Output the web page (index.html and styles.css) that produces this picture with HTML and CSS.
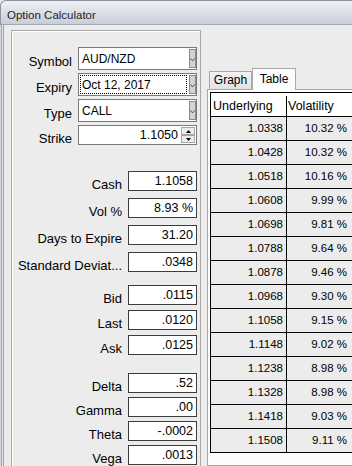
FILE: index.html
```html
<!DOCTYPE html>
<html lang="en">
<head>
<meta charset="UTF-8" />
<meta name="viewport" content="width=device-width, initial-scale=1" />
<title>Option Calculator</title>
<link rel="stylesheet" href="styles.css">
</head>
<body>

<div class="window">
  <div class="titlebar">Option Calculator</div>

  <div class="frame">
    <div class="panel">
      <div class="group g-contract">
        <div class="row">
          <span class="lbl">Symbol</span>
          <div class="combo">
            <span class="val">AUD/NZD</span>
            <span class="drop"><svg width="5" height="4" viewBox="0 0 5 4"><polyline points="0.5,0.5 2.5,2.8 4.5,0.5" fill="none" stroke="#4a4a4a" stroke-width="1"/></svg></span>
          </div>
        </div>
        <div class="row">
          <span class="lbl">Expiry</span>
          <div class="combo focus">
            <span class="val">Oct 12, 2017</span>
            <span class="drop"><svg width="5" height="4" viewBox="0 0 5 4"><polyline points="0.5,0.5 2.5,2.8 4.5,0.5" fill="none" stroke="#4a4a4a" stroke-width="1"/></svg></span>
          </div>
        </div>
        <div class="row">
          <span class="lbl">Type</span>
          <div class="combo">
            <span class="val">CALL</span>
            <span class="drop"><svg width="5" height="4" viewBox="0 0 5 4"><polyline points="0.5,0.5 2.5,2.8 4.5,0.5" fill="none" stroke="#4a4a4a" stroke-width="1"/></svg></span>
          </div>
        </div>
        <div class="row">
          <span class="lbl">Strike</span>
          <div class="spin">
            <span class="val">1.1050</span>
            <span class="arrows">
              <span class="arrow"><svg width="5" height="3" viewBox="0 0 5 3"><polygon points="0,3 2.5,0 5,3" fill="#000"/></svg></span>
              <span class="arrow"><svg width="5" height="3" viewBox="0 0 5 3"><polygon points="0,0 2.5,3 5,0" fill="#000"/></svg></span>
            </span>
          </div>
        </div>
      </div>

      <div class="group g-market">
        <div class="row"><span class="lbl">Cash</span><div class="box">1.1058</div></div>
        <div class="row"><span class="lbl">Vol %</span><div class="box">8.93 %</div></div>
        <div class="row"><span class="lbl">Days to Expire</span><div class="box">31.20</div></div>
        <div class="row"><span class="lbl">Standard Deviat...</span><div class="box">.0348</div></div>
      </div>

      <div class="group g-quote">
        <div class="row"><span class="lbl">Bid</span><div class="box">.0115</div></div>
        <div class="row"><span class="lbl">Last</span><div class="box">.0120</div></div>
        <div class="row"><span class="lbl">Ask</span><div class="box">.0125</div></div>
      </div>

      <div class="group g-greeks">
        <div class="row"><span class="lbl">Delta</span><div class="box">.52</div></div>
        <div class="row"><span class="lbl">Gamma</span><div class="box">.00</div></div>
        <div class="row"><span class="lbl">Theta</span><div class="box">-.0002</div></div>
        <div class="row"><span class="lbl">Vega</span><div class="box">.0013</div></div>
      </div>
    </div>

    <div class="tabs">
      <div class="tabstrip">
        <div class="tab">Graph</div>
        <div class="tab active">Table</div>
      </div>
      <div class="tabpage">
        <div class="grid">
          <div class="grid-row head"><div class="c1">Underlying</div><div class="c2">Volatility</div></div>
          <div class="grid-row"><div class="c1">1.0338</div><div class="c2">10.32 %</div></div>
          <div class="grid-row"><div class="c1">1.0428</div><div class="c2">10.32 %</div></div>
          <div class="grid-row"><div class="c1">1.0518</div><div class="c2">10.16 %</div></div>
          <div class="grid-row"><div class="c1">1.0608</div><div class="c2">9.99 %</div></div>
          <div class="grid-row"><div class="c1">1.0698</div><div class="c2">9.81 %</div></div>
          <div class="grid-row"><div class="c1">1.0788</div><div class="c2">9.64 %</div></div>
          <div class="grid-row"><div class="c1">1.0878</div><div class="c2">9.46 %</div></div>
          <div class="grid-row"><div class="c1">1.0968</div><div class="c2">9.30 %</div></div>
          <div class="grid-row"><div class="c1">1.1058</div><div class="c2">9.15 %</div></div>
          <div class="grid-row"><div class="c1">1.1148</div><div class="c2">9.02 %</div></div>
          <div class="grid-row"><div class="c1">1.1238</div><div class="c2">8.98 %</div></div>
          <div class="grid-row"><div class="c1">1.1328</div><div class="c2">8.98 %</div></div>
          <div class="grid-row"><div class="c1">1.1418</div><div class="c2">9.03 %</div></div>
          <div class="grid-row"><div class="c1">1.1508</div><div class="c2">9.11 %</div></div>
        </div>
      </div>
    </div>
  </div>
</div>

</body>
</html>
```

FILE: styles.css
```css
  body {
    margin: 0;
    background: #ececec;
    font-family: "Liberation Sans", Arial, sans-serif;
    color: #000;
  }
  .window {
    width: 352px;
    height: 466px;
    overflow: hidden;
    display: flex;
    flex-direction: column;
  }

  /* title bar */
  .titlebar {
    box-sizing: border-box;
    height: 25px;
    flex: none;
    border-top: 1px solid #8e93a0;
    border-left: 1px solid #8e93a0;
    border-bottom: 1px solid #a3a8b4;
    border-top-left-radius: 6px;
    background: linear-gradient(#eef0f4, #c9cdd7);
    padding: 6px 0 0 6px;
    font-size: 11.5px;
    line-height: 16px;
    color: #1e1e1e;
  }

  .frame {
    flex: 1;
    min-height: 0;
    display: flex;
    padding: 5px 0 0 11px;
    box-shadow: inset 1px 0 #d8d8e0, inset 2px 0 #a0a2b6, inset 3px 0 #e4e4ec, inset 4px 0 #a0a2b6;
  }

  /* left panel */
  .panel {
    flex: none;
    width: 190px;
    box-sizing: border-box;
    border: 1px solid #a8a8a8;
    border-bottom: none;
    box-shadow: inset 1px 1px #fff;
    padding: 16px 3px 0 0;
    display: flex;
    flex-direction: column;
  }
  .group {
    display: flex;
    flex-direction: column;
  }
  .g-contract { gap: 3px; }
  .g-market { margin-top: 26px; gap: 7px; }
  .g-quote { margin-top: 13px; gap: 5px; }
  .g-greeks { margin-top: 18px; gap: 4px; }

  .row {
    display: flex;
    justify-content: flex-end;
    align-items: center;
    gap: 6px;
  }
  .lbl {
    font-size: 13px;
    line-height: 13px;
    padding-top: 6px;
    white-space: nowrap;
  }

  .combo {
    width: 119px;
    height: 23px;
    box-sizing: border-box;
    border: 1px solid #7a7a7a;
    background: #fff;
    padding: 1px 0 1px 1px;
    display: flex;
  }
  .combo .val {
    flex: 1;
    display: flex;
    align-items: center;
    border: 1px solid transparent;
    padding-left: 1px;
    margin-right: 2px;
    font-size: 12px;
  }
  .combo.focus .val {
    border: 1px dotted #000;
  }
  .drop {
    width: 7px;
    box-sizing: border-box;
    background: #d4d4d4;
    border: 1px solid #8a8a8a;
    display: flex;
    justify-content: center;
    align-items: flex-end;
    padding-bottom: 5px;
  }
  .drop svg { display: block; }

  .spin {
    width: 119px;
    height: 20px;
    box-sizing: border-box;
    border: 1px solid #7a7a7a;
    background: #fff;
    display: flex;
  }
  .spin .val {
    flex: 1;
    text-align: right;
    padding-right: 3px;
    font-size: 12.5px;
    line-height: 18px;
  }
  .arrows {
    width: 14px;
    margin: 1px 1px 1px 0;
    display: flex;
    flex-direction: column;
  }
  .arrow {
    flex: 1;
    box-sizing: border-box;
    border: 1px solid #a6a6a6;
    background: #ececec;
    display: flex;
    justify-content: center;
    align-items: center;
  }
  .arrow svg { display: block; }

  .box {
    width: 69px;
    height: 20px;
    box-sizing: border-box;
    border: 1px solid #3c3c3c;
    background: #fff;
    text-align: right;
    padding-right: 3px;
    font-size: 12.5px;
    line-height: 18px;
  }

  /* tabs */
  .tabs {
    flex: 1;
    min-width: 0;
    margin: 38px 0 0 6px;
    display: flex;
    flex-direction: column;
  }
  .tabstrip {
    height: 21px;
    flex: none;
    display: flex;
    align-items: flex-end;
    padding-left: 2px;
  }
  .tab {
    box-sizing: border-box;
    width: 43px;
    height: 18px;
    border: 1px solid #a9a9a9;
    border-bottom: none;
    background: linear-gradient(#f3f3f3, #e2e2e2);
    text-align: center;
    font-size: 12px;
    line-height: 17px;
  }
  .tab.active {
    position: relative;
    width: 44px;
    height: 22px;
    margin-bottom: -1px;
    background: #fcfcfc;
    line-height: 20px;
  }
  .tabpage {
    flex: 1;
    border: 1px solid #a9a9a9;
    border-right: none;
    background: #fcfcfc;
    padding: 2px 0 0 2px;
  }

  .grid {
    width: 143px;
    border-top: 1px solid #000;
    border-left: 1px solid #000;
  }
  .grid-row {
    display: flex;
    height: 24px;
    box-sizing: border-box;
    border-bottom: 1px solid #000;
    background: #ececec;
    font-size: 11.5px;
    line-height: 23px;
  }
  .grid-row .c1 {
    width: 76px;
    box-sizing: border-box;
    border-right: 1px solid #000;
    text-align: right;
    padding-right: 3px;
  }
  .grid-row .c2 {
    width: 66px;
    box-sizing: border-box;
    text-align: right;
    padding-right: 6px;
  }
  .grid-row.head {
    background: #fff;
    font-size: 12.5px;
    line-height: 20px;
    padding-top: 3px;
  }
  .grid-row.head .c1,
  .grid-row.head .c2 {
    text-align: left;
    padding-right: 0;
  }
  .grid-row.head .c1 { padding-left: 2px; }
  .grid-row.head .c2 { padding-left: 1px; }
```
